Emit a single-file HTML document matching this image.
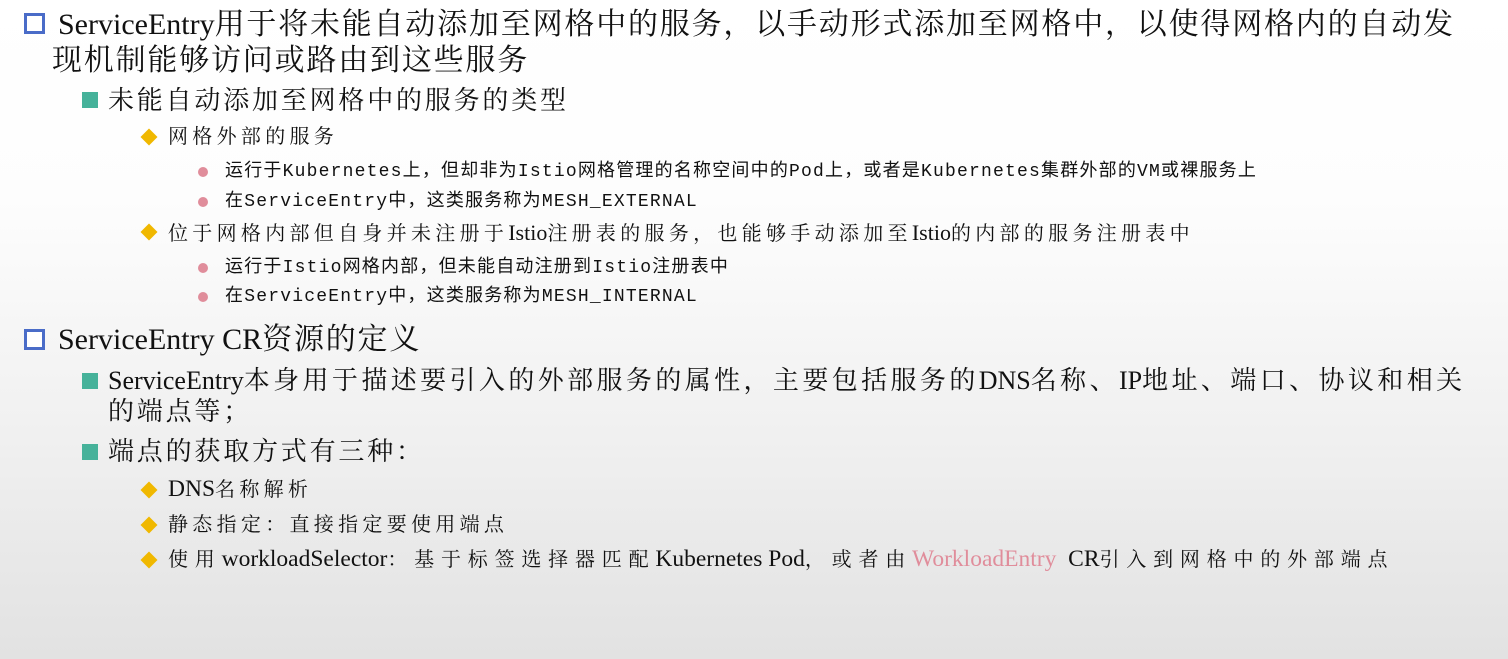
<!DOCTYPE html>
<html><head><meta charset="utf-8">
<style>
html,body{margin:0;padding:0}
body{width:1508px;height:659px;overflow:hidden;position:relative;
background:linear-gradient(to bottom,#ffffff 0px,#fdfdfd 200px,#f1f1f1 420px,#e2e2e2 659px);
font-family:"Liberation Serif","Noto Serif CJK SC",serif;color:#111;}
.t{position:absolute;white-space:nowrap;line-height:1}
.l1{font-size:30px;letter-spacing:1.8px}
.l2{font-size:26px;letter-spacing:2.8px}
.l3{font-size:20px;letter-spacing:4.3px}
.l4{font-size:18px;font-family:"Liberation Mono","Noto Sans CJK SC",monospace;letter-spacing:1.2px}
.la{letter-spacing:0}
.l3 .la{font-size:22px}
.l3 .lb{font-size:23.5px;letter-spacing:0}
.box{position:absolute;width:15px;height:15px;border:3px solid #4a6cc8;background:#fff}
.sq{position:absolute;width:16px;height:16px;background:#46b29a}
.dia{position:absolute;width:12px;height:12px;background:#f0b800;transform:rotate(45deg)}
.dot{position:absolute;width:10px;height:10px;border-radius:50%;background:#e08d9b}
.pk{color:#e08d9b}
</style></head><body>
<div class="box" style="left:24px;top:13px"></div>
<div class="t l1" style="left:58px;top:10px"><span class="la">ServiceEntry</span>用于将未能自动添加至网格中的服务，以手动形式添加至网格中，以使得网格内的自动发</div>
<div class="t l1" style="left:52px;top:46px">现机制能够访问或路由到这些服务</div>

<div class="sq" style="left:82px;top:92px"></div>
<div class="t l2" style="left:108px;top:88px">未能自动添加至网格中的服务的类型</div>

<div class="dia" style="left:143px;top:131px"></div>
<div class="t l3" style="left:168px;top:127px">网格外部的服务</div>
<div class="dot" style="left:198px;top:167px"></div>
<div class="t l4" style="left:225px;top:163px">运行于Kubernetes上，但却非为Istio网格管理的名称空间中的Pod上，或者是Kubernetes集群外部的VM或裸服务上</div>
<div class="dot" style="left:198px;top:197px"></div>
<div class="t l4" style="left:225px;top:193px">在ServiceEntry中，这类服务称为MESH_EXTERNAL</div>

<div class="dia" style="left:143px;top:226px"></div>
<div class="t l3" style="left:168px;top:222px">位于网格内部但自身并未注册于<span class="la">Istio</span>注册表的服务，也能够手动添加至<span class="la">Istio</span>的内部的服务注册表中</div>
<div class="dot" style="left:198px;top:263px"></div>
<div class="t l4" style="left:225px;top:259px">运行于Istio网格内部，但未能自动注册到Istio注册表中</div>
<div class="dot" style="left:198px;top:292px"></div>
<div class="t l4" style="left:225px;top:288px">在ServiceEntry中，这类服务称为MESH_INTERNAL</div>

<div class="box" style="left:24px;top:329px"></div>
<div class="t l1" style="left:58px;top:325px"><span class="la">ServiceEntry CR</span>资源的定义</div>

<div class="sq" style="left:82px;top:373px"></div>
<div class="t l2" style="left:108px;top:368px;letter-spacing:3.4px"><span class="la">ServiceEntry</span>本身用于描述要引入的外部服务的属性，主要包括服务的<span class="la">DNS</span>名称、<span class="la">IP</span>地址、端口、协议和相关</div>
<div class="t l2" style="left:108px;top:399px">的端点等；</div>

<div class="sq" style="left:82px;top:444px"></div>
<div class="t l2" style="left:108px;top:439px">端点的获取方式有三种：</div>

<div class="dia" style="left:143px;top:484px"></div>
<div class="t l3" style="left:168px;top:478px"><span class="lb">DNS</span>名称解析</div>
<div class="dia" style="left:143px;top:519px"></div>
<div class="t l3" style="left:168px;top:515px">静态指定：直接指定要使用端点</div>
<div class="dia" style="left:143px;top:554px"></div>
<div class="t l3" style="left:168px;top:548px;letter-spacing:6.8px">使用<span class="lb">workloadSelector</span>：基于标签选择器匹配<span class="lb">Kubernetes Pod</span>，或者由<span class="lb pk">WorkloadEntry</span> <span class="lb">CR</span>引入到网格中的外部端点</div>
</body></html>
